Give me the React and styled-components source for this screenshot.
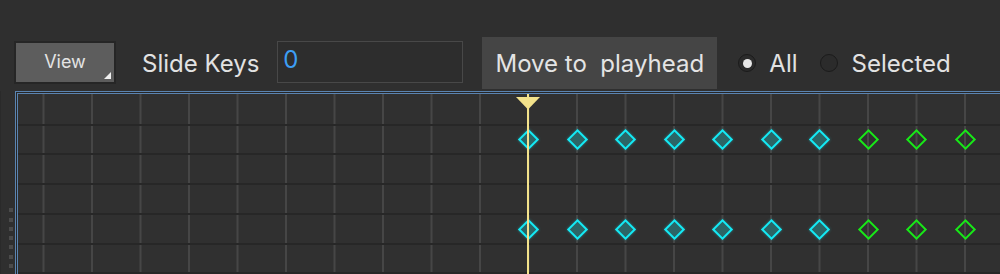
import React from "react"
import styled, { createGlobalStyle } from "styled-components"

const GlobalStyle = createGlobalStyle`
  html, body {
    margin: 0;
    padding: 0;
    background: #2f2f2f;
    overflow: hidden;
  }
  body {
    font-family: Inter, "Liberation Sans", sans-serif;
    color: #e2e2e2;
  }
`

const Page = styled.div`
  width: 1000px;
  height: 274px;
  background: #2f2f2f;
  overflow: hidden;
  padding-top: 37px;
  box-sizing: border-box;
`

const Toolbar = styled.div`
  display: flex;
  align-items: center;
  height: 52px;
  padding-left: 14px;
`

const ViewButton = styled.div`
  position: relative;
  width: 98px;
  height: 37px;
  box-sizing: content-box;
  border: 2px solid #262626;
  background: #5d5d5d;
  color: #e4e4e4;
  font-size: 18px;
  display: flex;
  align-items: center;
  justify-content: center;
  margin-top: -2px;
  padding-bottom: 2px;

  &::after {
    content: "";
    position: absolute;
    right: 3px;
    bottom: 3px;
    border-left: 7px solid transparent;
    border-bottom: 7px solid #f0f0f0;
  }
`

const Label = styled.span`
  font-size: 24px;
  color: #e2e2e2;
  margin-left: ${p => p.$gap || 0}px;
  white-space: pre;
`

const KeysInput = styled.div`
  width: 186px;
  height: 42px;
  margin-left: 18px;
  margin-top: -3px;
  border: 1px solid #484848;
  background: #2d2d2d;
  color: #3d9ef4;
  font-size: 24px;
  display: flex;
  align-items: center;
  padding: 0 0 5px 5px;
  box-sizing: border-box;
`

const MoveButton = styled.div`
  margin-left: 19px;
  width: 235px;
  height: 52px;
  background: #454545;
  display: flex;
  align-items: center;
  justify-content: center;
  font-size: 24px;
  color: #e4e4e4;
  white-space: pre;
`

const Radio = styled.span`
  width: 16px;
  height: 16px;
  border-radius: 50%;
  border: 1px solid #1b1b1b;
  background: #2b2b2b;
  margin-left: ${p => p.$gap}px;
  display: flex;
  align-items: center;
  justify-content: center;

  &::after {
    content: "";
    width: 9px;
    height: 9px;
    border-radius: 50%;
    background: ${p => (p.$checked ? "#e8e8e8" : "transparent")};
  }
`

const Body = styled.div`
  display: flex;
  margin-top: 2px;
  height: 183px;
`

const Grip = styled.div`
  width: 15px;
  flex: none;
  display: flex;
  flex-direction: column;
  justify-content: flex-end;
  align-items: flex-start;
  gap: 5.3px;
  padding: 0 0 6px 8px;
  box-sizing: border-box;
  border-left: 1px solid #2a2a2a;
`

const GripDot = styled.span`
  width: 4px;
  height: 4px;
  background: #4b4b4b;
`

const Timeline = styled.div`
  position: relative;
  flex: 1;
  border-left: 1px solid #5a83b0;
  border-top: 1px solid #5a83b0;
  padding: 2px 0 0 2px;
  box-shadow: inset 1px 1px 0 #262626, inset 2px 2px 0 #5a83b0;
  background-color: #303030;
  background-image: linear-gradient(to right, #464646 2px, transparent 2px);
  background-size: 48.5px 100%;
  background-position: 27.5px 0;
  background-origin: border-box;
  overflow: hidden;
`

const Track = styled.div`
  position: relative;
  height: ${p => p.$h}px;
  border-bottom: 2px solid #272727;
  box-sizing: border-box;
`

const Key = styled.span`
  position: absolute;
  top: 50%;
  width: 15px;
  height: 15px;
  box-sizing: border-box;
  margin: -7px 0 0 -7.5px;
  transform: rotate(45deg);
  border: 2px solid ${p => (p.$selected ? "#14eaf5" : "#18e818")};
  background: ${p => (p.$selected ? "#2b6566" : "transparent")};
  box-shadow: ${p =>
    p.$selected ? "0 0 3px rgba(30, 220, 230, 0.45)" : "none"};
`

const Playhead = styled.div`
  position: absolute;
  top: 2px;
  bottom: 0;
  left: 500px;
  width: 24px;
  pointer-events: none;

  &::before {
    content: "";
    position: absolute;
    left: 11px;
    top: 0;
    bottom: 0;
    width: 2px;
    background: #f3e28b;
  }
`

const tracks = [31.5, 29.75, 29.75, 29.75, 29.75, 29.75, 29.75]
const keyTracks = [1, 4]
const keys = Array.from({ length: 10 }, (_, i) => ({
  x: 510.5 + 48.5 * i,
  selected: i < 7
}))

export default function App() {
  return (
    <Page>
      <GlobalStyle />
      <Toolbar>
        <ViewButton>View</ViewButton>
        <Label $gap={26}>Slide Keys</Label>
        <KeysInput>0</KeysInput>
        <MoveButton>Move to  playhead</MoveButton>
        <Radio $gap={21} $checked />
        <Label $gap={13}>All</Label>
        <Radio $gap={22} />
        <Label $gap={14}>Selected</Label>
      </Toolbar>
      <Body>
        <Grip>
          {Array.from({ length: 7 }, (_, i) => (
            <GripDot key={i} />
          ))}
        </Grip>
        <Timeline>
          {tracks.map((h, t) => (
            <Track key={t} $h={h}>
              {keyTracks.includes(t) &&
                keys.map((k, i) => (
                  <Key key={i} $selected={k.selected} style={{ left: k.x }} />
                ))}
            </Track>
          ))}
          <Playhead>
            <svg width="24" height="13" viewBox="0 0 24 13">
              <polygon points="0,0 24,0 12,12.5" fill="#f3e28b" />
            </svg>
          </Playhead>
        </Timeline>
      </Body>
    </Page>
  )
}
